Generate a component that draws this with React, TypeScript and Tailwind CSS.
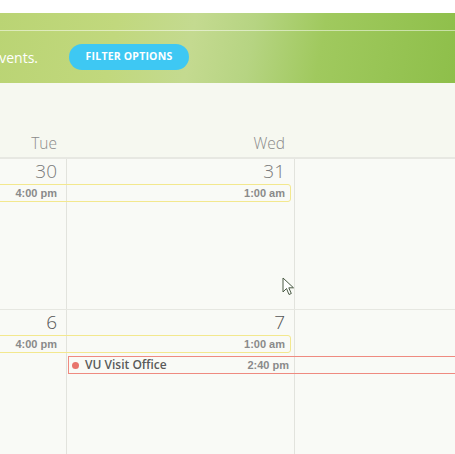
import React from "react";

export default function App() {
  return (
    <div className="relative w-[455px] h-[454px] overflow-hidden bg-white" style={{ fontFamily: '"Open Sans", sans-serif' }}>
      <div className="h-[13px] bg-white" />
      {/* Banner */}
      <div className="h-[70px] bg-[linear-gradient(100deg,#bad474_0%,#c1d87d_25%,#c4da90_42%,#b6d482_55%,#a0c95e_70%,#8ebf4a_100%)]">
        <div className="h-[18px] border-b border-white/50" />
        <div className="flex items-center h-[52px]">
          <div className="w-[38px] flex justify-end whitespace-nowrap text-[14px] text-white">
            to see events.
          </div>
          <button className="ml-[31px] w-[120px] h-[26px] rounded-full bg-[#3ec8f3] text-white text-[10.5px] font-bold tracking-[0.2px] flex items-center justify-center">
            FILTER OPTIONS
          </button>
        </div>
      </div>
      {/* Header */}
      <div className="h-[76px] bg-[#f6f8f0] border-b-2 border-[#e7e8e2] flex items-end">
        <div className="ml-[-161px] grid grid-cols-[228px_228px_228px] pb-[2px] text-[15.5px] text-[#8a8a8a] font-light">
          <div className="text-right pr-[10px]">Tue</div>
          <div className="text-right pr-[10px]">Wed</div>
          <div />
        </div>
      </div>
      {/* Week rows */}
      <div className="bg-[#f9faf6]">
        <WeekRow height="h-[151px]" bordered dates={["30", "31", ""]}>
          <MultiBar />
        </WeekRow>
        <WeekRow height="h-[150px]" dates={["6", "7", ""]} dark>
          <MultiBar />
          <div className="col-start-2 col-span-2 ml-[1px] mt-[3px] h-[18px] border border-[#ef8a80] flex items-center">
            <div className="w-[226px] flex items-center pl-[3px] pr-[6px]">
              <span className="w-[7px] h-[7px] rounded-full bg-[#e8746b]" />
              <span className="ml-[6px] text-[12px] font-semibold text-[#5a5a5a]">VU Visit Office</span>
              <span className="ml-auto text-[11px] font-bold text-[#8a8a8a]" style={{ fontFamily: '"Liberation Sans", Arial, sans-serif' }}>
                2:40 pm
              </span>
            </div>
          </div>
        </WeekRow>
      </div>
      {/* Cursor */}
      <svg className="absolute left-[282px] top-[277px]" width="14" height="20" viewBox="0 0 14 20">
        <path d="M1 1 L1 15 L4.5 11.5 L7 17.5 L9.3 16.5 L6.8 10.8 L11.5 10.8 Z" fill="#fff" stroke="#4a5a44" strokeWidth="1" strokeLinejoin="round" />
      </svg>
    </div>
  );
}

function MultiBar() {
  return (
    <div className="col-span-2 ml-[2px] mr-[4px] h-[18px] border border-[#f3e88e] rounded-r-[3px] grid grid-cols-[225px_1fr] items-center text-[11px] font-bold text-[#8a8a8a]" style={{ fontFamily: '"Liberation Sans", Arial, sans-serif' }}>
      <div className="text-right pr-[10px]">4:00 pm</div>
      <div className="text-right pr-[5px]">1:00 am</div>
    </div>
  );
}

function WeekRow({
  height,
  bordered,
  dates,
  dark,
  children,
}: {
  height: string;
  bordered?: boolean;
  dates: string[];
  dark?: boolean;
  children: React.ReactNode;
}) {
  return (
    <div className={`relative ${height} ${bordered ? "border-b border-[#e6e7e1]" : ""}`}>
      <div className="absolute top-0 bottom-0 left-[-161px] grid grid-cols-[228px_228px_228px]">
        <div className="border-r border-[#e2e3dd]" />
        <div className="border-r border-[#e2e3dd]" />
        <div />
      </div>
      <div className="relative ml-[-161px] grid grid-cols-[228px_228px_228px]">
        {dates.map((d, i) => (
          <div key={i} className={`h-[25px] text-right pr-[10px] text-[19px] leading-[25px] font-light ${dark ? "text-[#555]" : "text-[#7a7a7a]"}`}>
            {d}
          </div>
        ))}
        {children}
      </div>
    </div>
  );
}
